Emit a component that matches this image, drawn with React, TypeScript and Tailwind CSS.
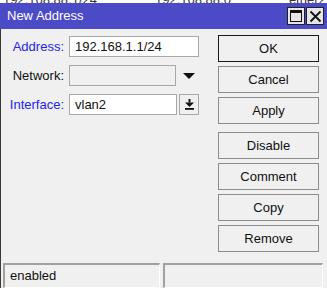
import React from 'react';

const font = { fontFamily: '"Liberation Sans", Arial, sans-serif' };

function DialogButton({ label, primary = false }: { label: string; primary?: boolean }) {
  return (
    <button
      className={`h-[27px] w-[101px] bg-[#f0f0f0] text-[13px] text-[#111] leading-none ${
        primary ? 'border border-[#1a1a1a]' : 'border-[1.5px] border-[#8c8c8c]'
      }`}
    >
      {label}
    </button>
  );
}

export default function App() {
  return (
    <div className="relative h-[288px] w-[327px] overflow-hidden bg-[#f0f0f0]" style={font}>
      {/* strip of the window behind */}
      <div className="relative h-[3px] overflow-hidden bg-white">
        <div className="absolute left-[3px] top-[-10px] flex gap-[58px] whitespace-nowrap text-[13px] text-[#333]">
          <span>192.168.88.1/24</span>
          <span>192.168.88.0</span>
          <span>ether2</span>
        </div>
      </div>

      {/* title bar */}
      <div className="flex h-[26px] items-center bg-[#4b4bc8] pl-[7px] pr-[3px]">
        <span className="text-[13px] text-white">New Address</span>
        <div className="ml-auto flex items-center gap-[1px]">
          <div className="flex h-[18px] w-[18px] items-center justify-center border border-[#222] bg-[#e6e6e6]">
            <div className="h-[12px] w-[12px] border-[1.5px] border-t-[3px] border-[#111]" />
          </div>
          <div className="flex h-[18px] w-[18px] items-center justify-center border border-[#222] bg-[#e6e6e6]">
            <svg width="13" height="13" viewBox="0 0 13 13">
              <path d="M1.5 1.5 L11.5 11.5 M11.5 1.5 L1.5 11.5" stroke="#111" strokeWidth="1.8" />
            </svg>
          </div>
        </div>
      </div>

      {/* body */}
      <div className="flex h-[234px] border-l border-[#3a3a3a]">
        <div className="flex w-[217px] flex-col gap-[8px] pt-[7px]">
          <div className="flex h-[21px] items-center">
            <span className="w-[63px] text-right text-[13px] text-[#2424ee]">Address:</span>
            <div className="ml-[5px] flex h-[21px] w-[130px] items-center border border-[#a8a8a8] bg-white pl-[5px] text-[13px] text-[#111]">
              192.168.1.1/24
            </div>
          </div>
          <div className="flex h-[21px] items-center">
            <span className="w-[63px] text-right text-[13px] text-[#111]">Network:</span>
            <div className="ml-[5px] h-[21px] w-[107px] border border-[#a8a8a8] bg-[#f0f0f0]" />
            <svg className="ml-[7px]" width="12" height="6" viewBox="0 0 12 6">
              <path d="M0 0 H12 L6 6 Z" fill="#111" />
            </svg>
          </div>
          <div className="flex h-[21px] items-center">
            <span className="w-[63px] text-right text-[13px] text-[#2424ee]">Interface:</span>
            <div className="ml-[5px] flex h-[21px] w-[108px] items-center border border-[#a8a8a8] bg-white pl-[5px] text-[13px] text-[#111]">
              vlan2
            </div>
            <div className="ml-[2px] flex h-[21px] w-[20px] items-center justify-center border border-[#a8a8a8] bg-[#f0f0f0]">
              <svg width="9" height="11" viewBox="0 0 9 11">
                <rect x="3.5" y="0" width="2" height="3.5" fill="#111" />
                <path d="M0 3.5 H9 L4.5 8 Z" fill="#111" />
                <rect x="0" y="9" width="9" height="1.8" fill="#111" />
              </svg>
            </div>
          </div>
        </div>

        <div className="flex flex-col pt-[6px]">
          <div className="flex flex-col gap-[4px]">
            <DialogButton label="OK" primary />
            <DialogButton label="Cancel" />
            <DialogButton label="Apply" />
          </div>
          <div className="mt-[8px] flex flex-col gap-[4px]">
            <DialogButton label="Disable" />
            <DialogButton label="Comment" />
            <DialogButton label="Copy" />
            <DialogButton label="Remove" />
          </div>
        </div>
      </div>

      {/* status bar */}
      <div className="flex h-[25px] gap-[3px] border-l border-[#3a3a3a] pl-[2px]">
        <div className="flex w-[157px] items-center border-l-2 border-t-2 border-[#a0a0a0] border-b border-r border-b-white border-r-white pl-[5px] text-[13px] text-[#111]">
          enabled
        </div>
        <div className="w-[160px] border-l-2 border-t-2 border-[#a0a0a0] border-b border-r border-b-white border-r-white" />
      </div>
    </div>
  );
}
